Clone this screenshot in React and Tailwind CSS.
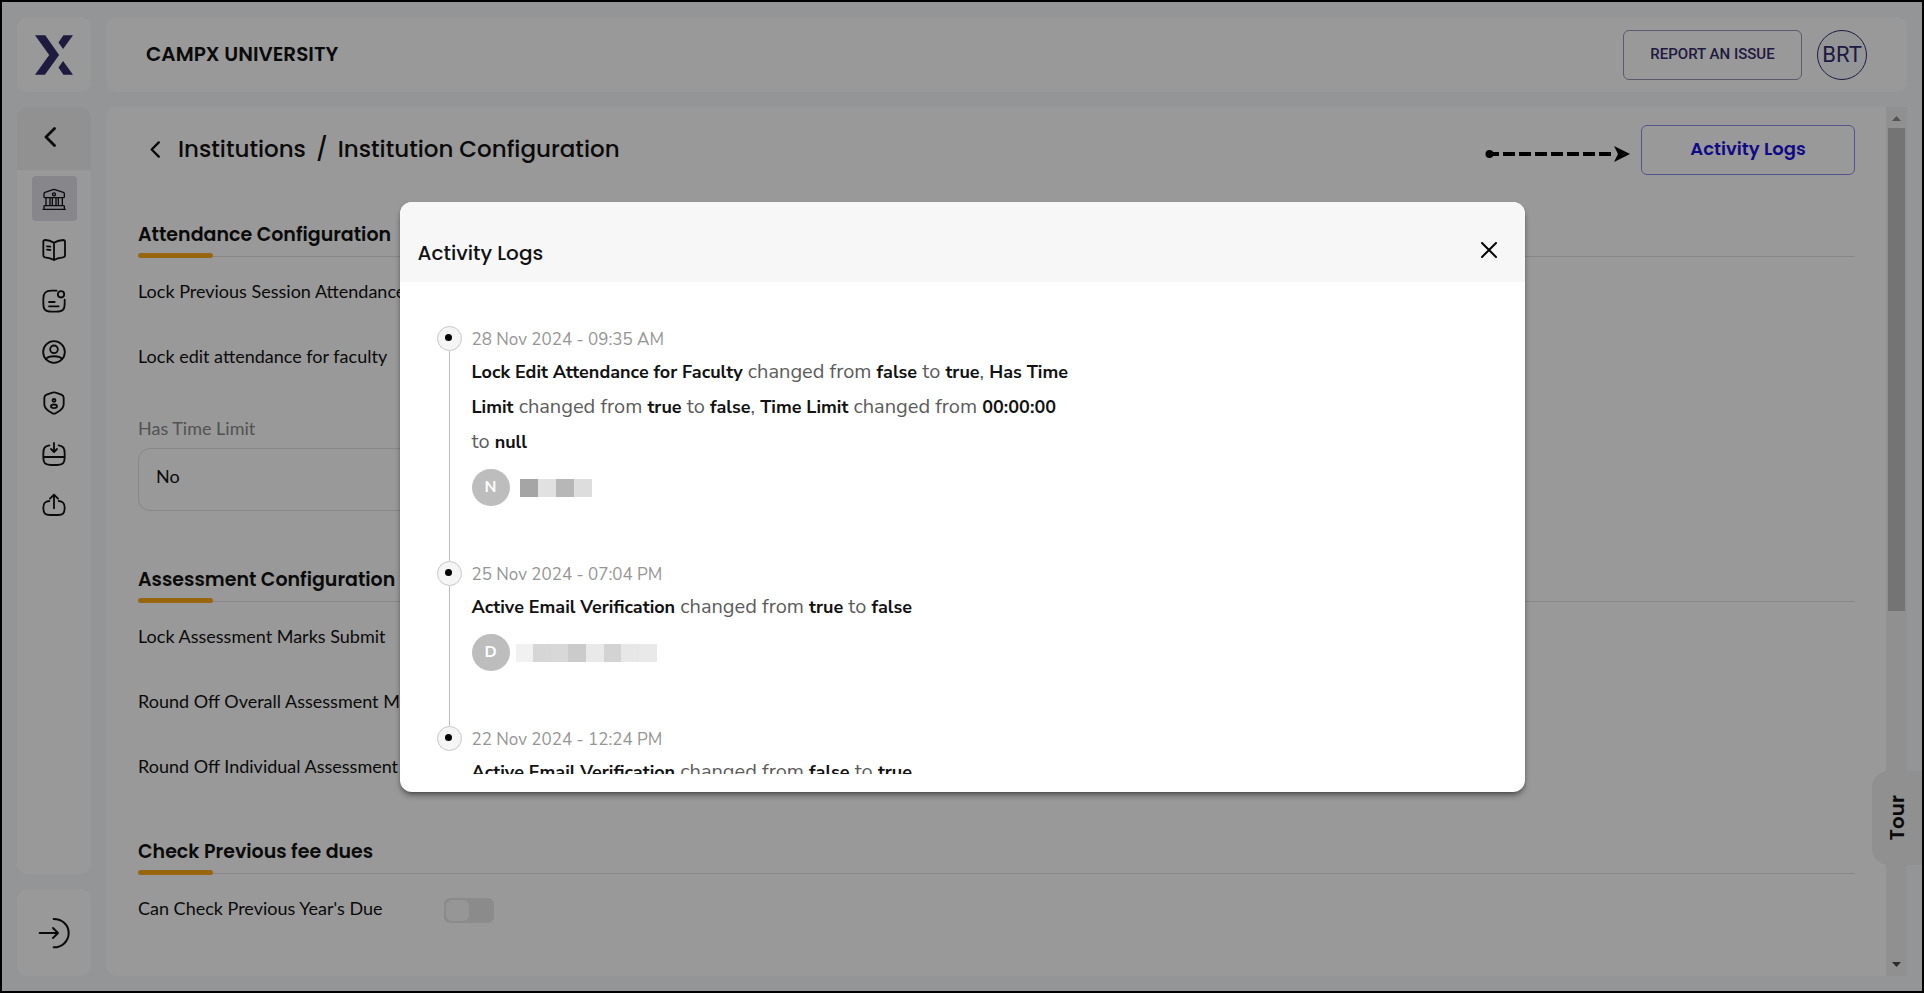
import React from "react";

const heading = "font-['Poppins','Inter',sans-serif]";
const formText = "font-['Avenir','Lato',sans-serif]";
const logText = "font-['Avenir','Nunito_Sans','Nunito','Lato',sans-serif]";

function Icon({ children }) {
  return (
    <svg viewBox="0 0 72 72" className="size-6" fill="none" stroke="currentColor" strokeWidth="5.500" strokeLinecap="round" strokeLinejoin="round" aria-hidden="true">
      {children}
    </svg>
  );
}

const navItems = [
  {
    label: "Institutions",
    icon: (
      <g strokeWidth="4">
        <path d="M6 20Q6 17 9 16L33 8Q36 7 39 8L64 16Q67 17 67 20V29Q67 32 64 32H9Q6 32 6 29Z" />
        <circle cx="36" cy="22" r="4.500" />
        <path d="M12 32V55M24 32V55M31 32V55M42 32V55M49 32V55M61 32V55M6 66V58Q6 56 8 56H64Q67 56 67 58V66M3 67H70" />
      </g>
    ),
  },
  {
    label: "Courses",
    icon: <path d="M36 14C28 9 16 6 10 6Q4 6 4 11V52Q4 57 9 58C18 59 28 61 36 66C44 61 54 59 63 58Q69 57 69 52V11Q69 6 63 6C54 7 44 9 36 14V66M15 25L25 26M15 35L25 36" />,
  },
  {
    label: "Notices",
    icon: (
      <>
        <path d="M44 5H28C10 5 4 12 4 29V44C4 62 10 68 28 68H44C62 68 68 62 68 44V32M21 39H38M21 52H50" />
        <circle cx="57" cy="16" r="9.500" />
      </>
    ),
  },
  {
    label: "Profile",
    icon: (
      <>
        <circle cx="36" cy="36" r="32.500" />
        <circle cx="36" cy="28" r="11.500" />
        <path d="M12 57C20 46 52 46 60 57" />
      </>
    ),
  },
  {
    label: "Security",
    icon: (
      <>
        <path d="M31 5Q36 3 41 5L58 11Q65 14 65 20V40C65 50 58 56 52 60L42 66Q36 70 30 66L20 60C14 56 7 50 7 40V20Q7 14 14 11Z" />
        <circle cx="36" cy="28" r="4.500" />
        <ellipse cx="36" cy="46" rx="9" ry="5.500" />
      </>
    ),
  },
  {
    label: "Import",
    icon: <path d="M22 10C8 12 4 18 4 34V46C4 64 10 69 28 69H44C62 69 68 64 68 46V34C68 18 64 12 50 10M4 45H68M36 3V29M27 21L36 30L45 21" />,
  },
  {
    label: "Export",
    icon: <path d="M22 24C8 25 4 31 4 44C4 62 10 66 24 66H48C62 66 68 62 68 44C68 31 64 25 50 24M36 46V5M24 17L36 5L48 17" />,
  },
];

function Section({ title, rows, className = "", children }) {
  return (
    <section className={className}>
      <h2 className={`${heading} text-[19px] leading-[30px] font-semibold text-[#121212]`}>{title}</h2>
      <div className="mt-[3px] flex h-[5px] items-center">
        <div className="h-[5px] w-[75px] rounded-full bg-[#ffab1c]" />
        <div className="mt-0.5 h-px flex-1 bg-[#e2e2e2]" />
      </div>
      {rows.map((row) => (
        <label key={row} className="grid h-[65px] grid-cols-[306px_1fr] items-center text-lg text-[#121212]">
          <span className="whitespace-nowrap">{row}</span>
          <input
            type="checkbox"
            className="relative mt-1.5 h-[25px] w-[50px] appearance-none rounded-md bg-[#e8e8e8] before:absolute before:top-0.5 before:left-0.5 before:h-[21px] before:w-[23px] before:rounded-md before:bg-[#fafafa]"
          />
        </label>
      ))}
      {children}
    </section>
  );
}

const B = ({ children }) => <strong className="text-lg leading-none font-bold text-[#121212]">{children}</strong>;

const logs = [
  {
    date: "28 Nov 2024 - 09:35 AM",
    text: (
      <>
        <B>Lock Edit Attendance for Faculty</B> changed from <B>false</B> to <B>true</B>, <B>Has Time Limit</B> changed from <B>true</B> to <B>false</B>, <B>Time Limit</B> changed from <B>00:00:00</B> to <B>null</B>
      </>
    ),
    initial: "N",
    blocks: ["bg-[#a5a5a5]", "bg-[#e1e1e1]", "bg-[#b7b7b7]", "bg-[#dddddd]"],
    width: "ml-2.5 w-[72px]",
  },
  {
    date: "25 Nov 2024 - 07:04 PM",
    text: (
      <>
        <B>Active Email Verification</B> changed from <B>true</B> to <B>false</B>
      </>
    ),
    initial: "D",
    blocks: ["bg-[#f1f1f1]", "bg-[#d6d6d6]", "bg-[#d8d8d8]", "bg-[#cbcbcb]", "bg-[#e9e9e9]", "bg-[#d3d3d3]", "bg-[#e7e7e7]", "bg-[#e9e9e9]"],
    width: "ml-1.5 w-[141px]",
  },
  {
    date: "22 Nov 2024 - 12:24 PM",
    text: (
      <>
        <B>Active Email Verification</B> changed from <B>false</B> to <B>true</B>
      </>
    ),
    initial: "D",
    blocks: ["bg-[#f1f1f1]", "bg-[#d6d6d6]", "bg-[#d8d8d8]", "bg-[#cbcbcb]"],
    width: "ml-1.5 w-[72px]",
  },
];

function LogEntry({ date, text, initial, blocks, width }) {
  return (
    <li className="group flex gap-2.5">
      <div className="flex w-[25px] shrink-0 flex-col items-center">
        <span className="flex size-[25px] shrink-0 items-center justify-center rounded-full border border-[#c8c8c8] bg-[#f5f5f5] pr-0.5 pb-0.5">
          <span className="size-[7px] rounded-full bg-black" />
        </span>
        <span className="w-px flex-1 bg-[#bdbdbd] group-last:hidden" />
      </div>
      <div className="max-w-[600px] pb-[55px]">
        <time className="block text-[17px] leading-7 text-[#959595]">{date}</time>
        <p className="text-xl leading-[35px] text-[#5c5c5c]">{text}</p>
        <div className="mt-2.5 flex items-center">
          <span className="flex h-[37px] w-[38px] items-center justify-center rounded-full bg-[#bdbdbd] font-bold text-white">{initial}</span>
          <span className={`mt-0.5 flex h-[18px] ${width}`}>
            {blocks.map((b, i) => (
              <span key={i} className={`flex-1 ${b}`} />
            ))}
          </span>
        </div>
      </div>
    </li>
  );
}

function Chevron({ className }) {
  return (
    <svg viewBox="0 0 12 20" className={className} fill="none" stroke="currentColor" strokeWidth="2.800" strokeLinecap="round" strokeLinejoin="round" aria-hidden="true">
      <path d="M10.500 1.500L2 10L10.500 18.500" />
    </svg>
  );
}

export default function App() {
  return (
    <div className={`${formText} relative h-screen overflow-hidden border-2 border-black bg-[#f6f8fc] text-[#121212]`}>
      <div className="grid h-full grid-cols-[74px_1fr] grid-rows-[75px_minmax(0,1fr)] gap-[15px] p-[15px]">
        <a href="#home" aria-label="Home" className="flex items-center justify-center rounded-[10px] bg-white">
          <svg viewBox="0 0 115 120" className="h-10 w-[38px]" fill="#342d6b" aria-hidden="true">
            <path d="M0 0H31L73 60L30 120H0L43 60ZM86 0H115L85 42L71 22ZM85 78L115 120H86L71 98Z" />
          </svg>
        </a>

        <header className="flex items-center justify-between rounded-[10px] bg-white pr-10 pl-10">
          <span className={`${heading} pb-0.5 text-xl font-semibold`}>CAMPX UNIVERSITY</span>
          <div className="flex items-center gap-[15px]">
            <button className="h-[50px] w-[179px] rounded-md border border-[#9a96b5] font-[Roboto,sans-serif] text-[15px] font-medium text-[#342d6b]">REPORT AN ISSUE</button>
            <button className="size-[50px] rounded-full border border-[#342d6b] bg-[#f6f8fc] font-[Roboto,sans-serif] text-[22px] text-[#342d6b]">BRT</button>
          </div>
        </header>

        <aside className="flex min-h-0 flex-col gap-[15px]">
          <nav className="flex flex-1 flex-col items-center overflow-hidden rounded-[10px] bg-white">
            <button aria-label="Collapse menu" className="flex h-[63px] w-full items-center bg-[#f2f2f2] pb-1 pl-[27px]">
              <Chevron className="h-5 w-3" />
            </button>
            <ul className="mt-1.5 flex flex-col gap-1.5">
              {navItems.map((item, i) => (
                <li key={item.label}>
                  <a href={`#${item.label.toLowerCase()}`} aria-label={item.label} className={`flex size-[45px] items-center justify-center rounded ${i === 0 ? "bg-[#e2dfe8]" : ""}`}>
                    <Icon>{item.icon}</Icon>
                  </a>
                </li>
              ))}
            </ul>
          </nav>
          <button aria-label="Log out" className="flex h-[87px] items-center justify-center rounded-[10px] bg-white">
            <svg viewBox="0 0 96 96" className="size-8" fill="none" stroke="currentColor" strokeWidth="6" strokeLinecap="round" strokeLinejoin="round" aria-hidden="true">
              <path d="M47 6C73 6 92 24 92 48S73 91 47 91M5 48H60M45 33L60 48L45 63" />
            </svg>
          </button>
        </aside>

        <div className="flex min-h-0 overflow-hidden rounded-l-[10px] bg-white">
          <main className="min-w-0 flex-1 overflow-hidden pt-[18px] pr-[31px] pl-8">
            <div className="flex items-center justify-between">
              <div className="flex items-center pb-0.5">
                <a href="#back" aria-label="Back" className="pl-3">
                  <Chevron className="h-[17px] w-[10px]" />
                </a>
                <h1 className={`${heading} ml-[18px] flex gap-2.5 text-[23px] font-medium`}>
                  <a href="#institutions">Institutions</a>
                  <span>/</span>
                  <span>Institution Configuration</span>
                </h1>
              </div>
              <button className={`${heading} h-[50px] w-[214px] rounded-md border border-[#8f8cf0] pb-0.5 text-lg font-semibold text-[#1d12e0]`}>Activity Logs</button>
            </div>

            <Section className="mt-[45px]" title="Attendance Configuration" rows={["Lock Previous Session Attendance", "Lock edit attendance for faculty"]}>
              <div className="pt-7 pb-[15px]">
                <label htmlFor="time-limit" className="block text-lg leading-6 text-[#8a8a8a]">
                  Has Time Limit
                </label>
                <select id="time-limit" defaultValue="No" className="mt-2 block h-[63px] w-[420px] appearance-none rounded-xl border border-[#e2e2e2] bg-white px-[17px] pb-2 text-lg">
                  <option>No</option>
                  <option>Yes</option>
                </select>
              </div>
            </Section>
            <Section className="mt-[39px]" title="Assessment Configuration" rows={["Lock Assessment Marks Submit", "Round Off Overall Assessment Marks", "Round Off Individual Assessment Marks"]} />
            <Section className="mt-[39px]" title="Check Previous fee dues" rows={["Can Check Previous Year's Due"]} />
          </main>

          <div className="flex w-[21px] flex-col items-center bg-[#f0f0f0]" aria-hidden="true">
            <svg viewBox="0 0 21 21" className="size-[21px] shrink-0">
              <path d="M6 14L10.500 9L15 14Z" fill="#8a8a8a" />
            </svg>
            <div className="h-[483px] w-[17px] bg-[#c1c1c1]" />
            <svg viewBox="0 0 21 21" className="mt-auto size-[21px]">
              <path d="M6 7L10.500 12L15 7Z" fill="#4c4c4c" />
            </svg>
          </div>
        </div>
      </div>

      <button className={`${heading} absolute right-0 bottom-[126px] flex h-[94px] w-[50px] items-center justify-center rounded-l-2xl bg-[#f0f0f0] text-xl font-semibold`}>
        <span className="rotate-180 [writing-mode:vertical-rl]">Tour</span>
      </button>

      <div className="absolute inset-0 flex items-center justify-center bg-black/40">
        <div role="dialog" aria-modal="true" aria-labelledby="logs-title" className={`${logText} flex h-[590px] max-h-full w-[1125px] max-w-full flex-col overflow-hidden rounded-xl bg-white pb-[18px] shadow-md shadow-black/40`}>
          <div className="flex h-20 shrink-0 items-center justify-between bg-[#f7f7f7] pt-[22px] pr-7 pl-[18px]">
            <h2 id="logs-title" className={`${heading} text-xl font-medium`}>Activity Logs</h2>
            <button aria-label="Close" className="pb-1.5">
              <svg viewBox="0 0 16 16" className="size-4" fill="none" stroke="black" strokeWidth="2" strokeLinecap="round" aria-hidden="true">
                <path d="M1 1L15 15M15 1L1 15" />
              </svg>
            </button>
          </div>
          <ol className="min-h-0 flex-1 overflow-hidden px-[37px] pt-11">
            {logs.map((log) => (
              <LogEntry key={log.date} {...log} />
            ))}
          </ol>
        </div>
      </div>

      <svg viewBox="0 0 146 18" className="absolute top-[143px] right-[291px] h-[18px] w-[146px]" aria-hidden="true">
        <circle cx="4.500" cy="9" r="4" />
        <path d="M2 9H130" stroke="black" strokeWidth="4" strokeDasharray="12 4" />
        <path d="M129 1L145 9L129 17L133 9Z" />
      </svg>
    </div>
  );
}
